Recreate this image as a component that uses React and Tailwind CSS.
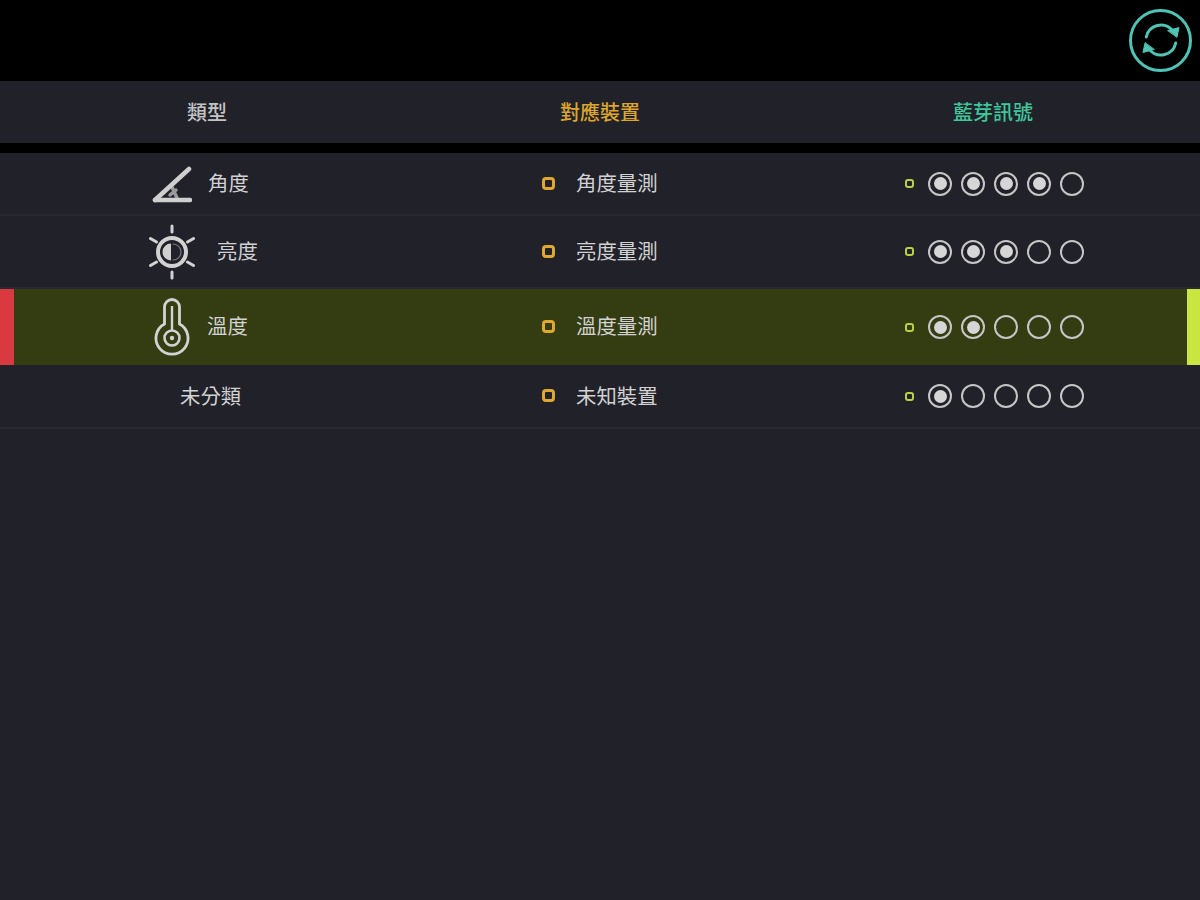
import React from "react";

const FONT = "font-['Noto_Sans_CJK_TC','Noto_Sans_CJK_SC',sans-serif]";

const RefreshIcon = () => (
  <svg width="44" height="44" viewBox="0 0 44 44" fill="none" stroke="#4fc4b4" strokeLinecap="round">
    <path d="M7.3 19 A15 15 0 0 1 33.5 12.4" strokeWidth="3" />
    <path d="M36.7 25 A15 15 0 0 1 10.5 31.6" strokeWidth="3" />
    <path d="M29 12.5 L40 9.5 L38 19 Z" fill="#4fc4b4" stroke="#4fc4b4" strokeWidth="1" strokeLinejoin="round" />
    <path d="M15 31.5 L4 34.5 L6 25 Z" fill="#4fc4b4" stroke="#4fc4b4" strokeWidth="1" strokeLinejoin="round" />
  </svg>
);

const AngleIcon = () => (
  <svg width="40" height="40" viewBox="0 0 40 40" fill="none" stroke="#cfcfcf" strokeLinecap="round">
    <path d="M3 36 L37 5" strokeWidth="4.5" />
    <path d="M3 36 H38" strokeWidth="4.5" />
    <path d="M20 23 L25 34 M18 31 L24 26" strokeWidth="3.5" opacity="0.7" />
  </svg>
);

const SunIcon = () => (
  <svg width="48" height="56" viewBox="0 0 48 56" fill="none" stroke="#d2d2d2" strokeLinecap="round">
    <circle cx="24" cy="28" r="14" strokeWidth="4" />
    <path d="M23 19.5 A8.5 8.5 0 0 0 23 36.5 Z" fill="#cfcfcf" stroke="none" />
    <path d="M25 20 A8 8 0 0 1 25 36" strokeWidth="1.2" opacity="0.5" />
    <path d="M24 2 V8 M24 48 V54 M2.5 14.5 L8.5 18 M39.5 38 L45.5 41.5 M2.5 41.5 L8.5 38 M39.5 18 L45.5 14.5" strokeWidth="3" />
  </svg>
);

const ThermoIcon = () => (
  <svg width="36" height="58" viewBox="0 0 36 58" fill="none" stroke="#d2d2d2">
    <path
      d="M10.5 26 V9 A7.5 7.5 0 0 1 25.5 9 V26 A16 16 0 1 1 10.5 26 Z"
      strokeWidth="2.8"
    />
    <path d="M18 8 V33" strokeWidth="2.4" />
    <circle cx="18" cy="40" r="7.5" strokeWidth="2.6" />
    <circle cx="18" cy="40" r="2.2" fill="#d2d2d2" stroke="none" />
  </svg>
);

const Signal = ({ level }) => (
  <div className="flex items-center">
    <span className="mr-[14px] h-[9px] w-[9px] rounded-[3px] border-2 border-[#b9d043]" />
    <div className="flex items-center gap-[9px]">
      {[0, 1, 2, 3, 4].map((i) => (
        <span
          key={i}
          className="flex h-6 w-6 items-center justify-center rounded-full border-2 border-[#c6c6c6]"
        >
          {i < level && <span className="h-[13px] w-[13px] rounded-full bg-[#d6d6d6]" />}
        </span>
      ))}
    </div>
  </div>
);

const Row = ({ icon, iconBox, label, labelClass, device, level, height, highlight, textShift }) => (
  <div
    className={
      highlight
        ? `relative grid grid-cols-[414px_372px_414px] items-center bg-[#343c11] ${height}`
        : `relative grid grid-cols-[414px_372px_414px] items-center border-b-2 border-[#282830] ${height}`
    }
  >
    {highlight && <span className="absolute bottom-0 left-0 top-0 w-[14px] bg-[#d93a42]" />}
    {highlight && <span className="absolute bottom-0 right-0 top-0 w-[13px] bg-[#c8e63f]" />}
    <div className={`flex items-center text-[20.4px] text-[#d2d2d2] ${labelClass}`}>
      {icon && <div className={`flex items-center justify-center ${iconBox}`}>{icon}</div>}
      <span className={textShift}>{label}</span>
    </div>
    <div className="flex items-center pl-[128px] text-[20.4px] text-[#d2d2d2]">
      <span className="mr-[21px] h-[13px] w-[13px] rounded-[4px] border-[3px] border-[#e0a82e]" />
      <span className={textShift}>{device}</span>
    </div>
    <div className="flex items-center pl-[119px]">
      <Signal level={level} />
    </div>
  </div>
);

export default function App() {
  return (
    <div className={`flex h-[900px] w-[1200px] flex-col overflow-hidden bg-[#21212a] ${FONT}`}>
      <div className="flex h-[81px] items-center justify-end bg-black pr-[8px]">
        <div className="mb-[1px] flex h-[63px] w-[63px] items-center justify-center rounded-full border-[3px] border-[#4fc4b4]">
          <RefreshIcon />
        </div>
      </div>

      <div className="grid h-[62px] grid-cols-[414px_372px_414px] items-center text-center text-[20px] font-medium">
        <span className="text-[#c4c4c4]">類型</span>
        <span className="text-[#dca52b]">對應裝置</span>
        <span className="text-[#3fc79a]">藍芽訊號</span>
      </div>

      <div className="h-[10px] bg-black" />

      <Row
        height="h-[63px]"
        textShift="pb-[2px]"
        icon={<AngleIcon />}
        iconBox="w-[40px] mr-[16px]"
        labelClass="pl-[152px]"
        label="角度"
        device="角度量測"
        level={4}
      />
      <Row
        height="h-[73px]"
        textShift="pb-[2px]"
        icon={<SunIcon />}
        iconBox="w-[48px] mr-[21px]"
        labelClass="pl-[148px]"
        label="亮度"
        device="亮度量測"
        level={3}
      />
      <Row
        height="h-[76px]"
        highlight
        textShift="pb-[3px]"
        icon={<ThermoIcon />}
        iconBox="w-[36px] mr-[17px]"
        labelClass="pl-[154px]"
        label="溫度"
        device="溫度量測"
        level={2}
      />
      <Row
        height="h-[64px]"
        textShift="pb-[2px]"
        labelClass="pl-[180px]"
        label="未分類"
        device="未知裝置"
        level={1}
      />
    </div>
  );
}
